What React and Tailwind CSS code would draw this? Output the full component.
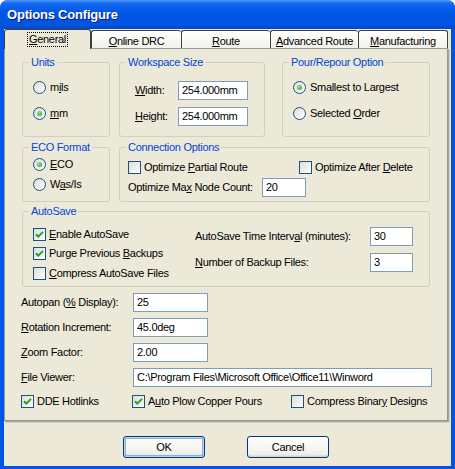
import React from 'react';

// underline the access-key letter at index i
const U = ({ t, i }) => {
  if (i === undefined || i < 0) return <>{t}</>;
  return (
    <>
      {t.slice(0, i)}
      <span className="underline underline-offset-[1px]">{t[i]}</span>
      {t.slice(i + 1)}
    </>
  );
};

const CheckBox = ({ checked }) => (
  <span className="w-[13px] h-[13px] shrink-0 border border-[#1C5180] bg-[linear-gradient(135deg,#DCDCD7,#FFFFFF)] flex items-center justify-center">
    {checked && (
      <svg width="11" height="11" viewBox="0 0 11 11">
        <path d="M2 5.2 L4.3 7.6 L9 2.9" stroke="#21A121" strokeWidth="2" fill="none" />
      </svg>
    )}
  </span>
);

const Radio = ({ checked }) => (
  <span className="w-[13px] h-[13px] shrink-0 rounded-full border border-[#1C5180] bg-[linear-gradient(135deg,#DCDCD7,#FFFFFF)] flex items-center justify-center">
    {checked && <span className="w-[5px] h-[5px] rounded-full bg-[radial-gradient(circle_at_35%_35%,#8CE58C,#21A121)]" />}
  </span>
);

const Check = ({ label, u, checked, className = '' }) => (
  <div className={`h-[16px] flex items-center gap-[3px] ${className}`}>
    <CheckBox checked={checked} />
    <span className="whitespace-nowrap"><U t={label} i={u} /></span>
  </div>
);

const Option = ({ label, u, checked, className = '' }) => (
  <div className={`h-[16px] flex items-center gap-[4px] ${className}`}>
    <Radio checked={checked} />
    <span className="whitespace-nowrap"><U t={label} i={u} /></span>
  </div>
);

const Field = ({ value, className = '' }) => (
  <div className={`h-[19px] shrink-0 border border-[#7F9DB9] bg-white pl-[3px] flex items-center whitespace-nowrap overflow-hidden ${className}`}>
    {value}
  </div>
);

const Group = ({ title, className = '', children }) => (
  <fieldset className={`border border-[#D0D0BF] rounded-[3px] min-w-0 shrink-0 ${className}`}>
    <legend className="ml-[6px] px-[2px] text-[#0046D5] leading-[13px]">{title}</legend>
    {children}
  </fieldset>
);

const tabs = [
  { t: 'Online DRC', w: 'w-[90px]' },
  { t: 'Route', w: 'w-[89px]' },
  { t: 'Advanced Route', w: 'w-[88px]' },
  { t: 'Manufacturing', w: 'w-[90px] border-r' },
];

const Row = ({ label, u, value, fieldW, className = '' }) => (
  <div className={`h-[19px] flex items-center ${className}`}>
    <span className="w-[112px] shrink-0 whitespace-nowrap"><U t={label} i={u} /></span>
    <Field value={value} className={fieldW} />
  </div>
);

export default function App() {
  return (
    <div className="w-[455px] h-[469px] bg-white font-['Liberation_Sans',Arial,sans-serif] text-[11px] leading-[13px] tracking-[-0.3px] text-black">
      <div className="w-[455px] h-[469px] flex flex-col rounded-t-[8px] bg-[#0055E5] overflow-hidden">
        {/* title bar */}
        <div className="h-[29px] shrink-0 flex items-center pl-[7px] bg-[linear-gradient(180deg,#4C9BFF_0%,#1466F0_12%,#0058E6_45%,#0054E0_85%,#0348C9_100%)]">
          <span className="text-white font-bold text-[13px] tracking-[-0.2px] [text-shadow:1px_1px_0_#0A1883]">Options Configure</span>
        </div>

        {/* client area */}
        <div className="flex-1 mx-[4px] mb-[3px] bg-[#ECE9D8] flex flex-col">
          {/* tabs */}
          <div className="h-[19px] shrink-0 flex items-end">
            <div className="relative z-10 w-[87px] h-[20px] -mb-[1px] border-l border-t border-r border-[#3F3F3F] rounded-t-[3px] bg-[#ECE9D8] flex justify-center pt-[2px]">
              <span className="h-[15px] px-[1px] border border-dotted border-black leading-[13px]"><U t="General" i={0} /></span>
            </div>
            {tabs.map((tab) => (
              <div
                key={tab.t}
                className={`h-[18px] border-l border-t border-[#3F3F3F] rounded-t-[3px] bg-[linear-gradient(180deg,#FFFFFF,#F2F1EA)] flex items-center justify-center pt-[3px] whitespace-nowrap ${tab.w}`}
              >
                <U t={tab.t} i={0} />
              </div>
            ))}
          </div>

          {/* tab page */}
          <div className="w-[444px] h-[373px] shrink-0 border border-[#919B9C] bg-[#ECE9D8] shadow-[1px_1px_0_#ACA899,2px_2px_0_#D2D0C4] flex flex-col">
            {/* row 1 */}
            <div className="flex pl-[17px] mt-[7px]">
              <Group title="Units" className="w-[88px] h-[81px]">
                <div className="flex flex-col gap-[10px] pl-[10px] mt-[10px]">
                  <Option label="mils" u={1} />
                  <Option label="mm" u={0} checked />
                </div>
              </Group>
              <Group title="Workspace Size" className="w-[146px] h-[81px] ml-[9px]">
                <div className="flex flex-col gap-[7px] pl-[15px] mt-[12px]">
                  <div className="flex items-center">
                    <span className="w-[43px] shrink-0"><U t="Width:" i={0} /></span>
                    <Field value="254.000mm" className="w-[70px]" />
                  </div>
                  <div className="flex items-center">
                    <span className="w-[43px] shrink-0"><U t="Height:" i={0} /></span>
                    <Field value="254.000mm" className="w-[70px]" />
                  </div>
                </div>
              </Group>
              <Group title="Pour/Repour Option" className="w-[148px] h-[81px] ml-[17px]">
                <div className="flex flex-col gap-[10px] pl-[10px] mt-[10px]">
                  <Option label="Smallest to Largest" checked />
                  <Option label="Selected Order" u={9} />
                </div>
              </Group>
            </div>

            {/* row 2 */}
            <div className="flex pl-[17px] mt-[4px]">
              <Group title="ECO Format" className="w-[88px] h-[61px]">
                <div className="flex flex-col gap-[4px] pl-[10px] mt-[2px]">
                  <Option label="ECO" u={0} checked />
                  <Option label="Was/Is" u={1} />
                </div>
              </Group>
              <Group title="Connection Options" className="w-[311px] h-[61px] ml-[9px]">
                <div className="pl-[8px] mt-[5px] flex flex-col gap-[3px]">
                  <div className="flex">
                    <Check label="Optimize Partial Route" u={9} className="w-[171px]" />
                    <Check label="Optimize After Delete" u={15} />
                  </div>
                  <div className="flex items-center">
                    <span className="w-[134px] shrink-0 whitespace-nowrap"><U t="Optimize Max Node Count:" i={11} /></span>
                    <Field value="20" className="w-[44px]" />
                  </div>
                </div>
              </Group>
            </div>

            {/* row 3 */}
            <div className="flex pl-[17px] mt-[3px]">
              <Group title="AutoSave" className="w-[408px] h-[82px]">
                <div className="flex">
                  <div className="w-[172px] pl-[10px] mt-[8px] flex flex-col">
                    <Check label="Enable AutoSave" u={0} checked />
                    <Check label="Purge Previous Backups" u={15} checked className="mt-[3px]" />
                    <Check label="Compress AutoSave Files" u={0} className="mt-[4px]" />
                  </div>
                  <div className="mt-[9px] flex flex-col gap-[7px]">
                    <div className="flex items-center">
                      <span className="w-[175px] shrink-0 whitespace-nowrap"><U t="AutoSave Time Interval (minutes):" i={20} /></span>
                      <Field value="30" className="w-[43px]" />
                    </div>
                    <div className="flex items-center">
                      <span className="w-[175px] shrink-0 whitespace-nowrap"><U t="Number of Backup Files:" i={0} /></span>
                      <Field value="3" className="w-[43px]" />
                    </div>
                  </div>
                </div>
              </Group>
            </div>

            {/* plain fields */}
            <div className="pl-[16px] mt-[6px] flex flex-col gap-[6px]">
              <Row label="Autopan (% Display):" u={9} value="25" fieldW="w-[75px]" />
              <Row label="Rotation Increment:" u={0} value="45.0deg" fieldW="w-[75px]" />
              <Row label="Zoom Factor:" u={0} value="2.00" fieldW="w-[75px]" />
              <Row label="File Viewer:" u={0} value="C:\Program Files\Microsoft Office\Office11\Winword" fieldW="w-[299px]" />
              <div className="flex">
                <Check label="DDE Hotlinks" checked className="w-[111px]" />
                <Check label="Auto Plow Copper Pours" u={1} checked className="w-[159px]" />
                <Check label="Compress Binary Designs" u={14} />
              </div>
            </div>
          </div>

          {/* buttons */}
          <div className="flex pl-[119px] mt-[15px] gap-[42px]">
            <button className="w-[82px] h-[22px] rounded-[3px] border border-[#003C74] bg-[linear-gradient(180deg,#FFFFFF,#F0F0EA_85%,#D6D0C5)] shadow-[inset_0_0_0_1px_#BCD4F6,inset_0_0_0_2px_#89ADE4]">
              OK
            </button>
            <button className="w-[82px] h-[22px] rounded-[3px] border border-[#003C74] bg-[linear-gradient(180deg,#FFFFFF,#F0F0EA_85%,#D6D0C5)]">
              Cancel
            </button>
          </div>
        </div>
      </div>
    </div>
  );
}
